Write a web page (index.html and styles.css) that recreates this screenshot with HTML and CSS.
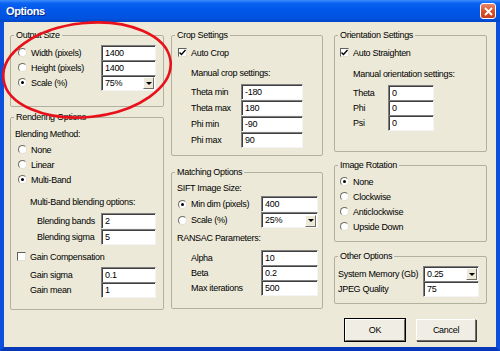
FILE: index.html
```html
<!DOCTYPE html>
<html lang="en">
<head>
  <meta charset="UTF-8" />
  <title>Options</title>
  <link rel="stylesheet" href="styles.css">
</head>
<body>

  <div class="window">

    <!-- Title bar -->
    <div class="titlebar">
      <span class="title">Options</span>
      <span class="close">
        <svg width="9" height="9" viewBox="0 0 9 9"><path d="M1 1L8 8M8 1L1 8" stroke="#fff" stroke-width="1.8"/></svg>
      </span>
    </div>

    <div class="frame">

      <!-- Left column -->
      <div class="col col-left">
        <fieldset class="group">
          <legend>Output Size</legend>
          <div class="inner output">
            <div class="row"><span class="radio"></span><span class="label">Width (pixels)</span><input class="field w55" type="text" value="1400"></div>
            <div class="row"><span class="radio"></span><span class="label">Height (pixels)</span><input class="field w55" type="text" value="1400"></div>
            <div class="row"><span class="radio on"></span><span class="label">Scale (%)</span><div class="combo w55">75%<span class="drop"></span></div></div>
          </div>
        </fieldset>

        <fieldset class="group gap5">
          <legend>Rendering Options</legend>
          <div class="inner rendering">
            <div class="text">Blending Method:</div>
            <div class="row ind3"><span class="radio"></span><span class="label">None</span></div>
            <div class="row ind3"><span class="radio"></span><span class="label">Linear</span></div>
            <div class="row ind3"><span class="radio on"></span><span class="label">Multi-Band</span></div>
            <div class="text ind15 mt8">Multi-Band blending options:</div>
            <div class="row tall ind22 mt3"><span class="label">Blending bands</span><input class="field w55" type="text" value="2"></div>
            <div class="row tall ind22"><span class="label">Blending sigma</span><input class="field w55" type="text" value="5"></div>
            <div class="row ind2 mt4"><span class="check"></span><span class="label">Gain Compensation</span></div>
            <div class="row ind15 mt3"><span class="label">Gain sigma</span><input class="field w55" type="text" value="0.1"></div>
            <div class="row ind15"><span class="label">Gain mean</span><input class="field w55" type="text" value="1"></div>
          </div>
        </fieldset>
      </div>

      <!-- Middle column -->
      <div class="col col-mid">
        <fieldset class="group">
          <legend>Crop Settings</legend>
          <div class="inner crop">
            <div class="row"><span class="check on"><svg width="7" height="7" viewBox="0 0 7 7"><path d="M0.5 3.5L2.5 5.5L6.5 1" fill="none" stroke="#000" stroke-width="1.4"/></svg></span><span class="label">Auto Crop</span></div>
            <div class="text ind13 mt6">Manual crop settings:</div>
            <div class="row tall ind13 mt3"><span class="label lw50">Theta min</span><input class="field w62" type="text" value="-180"></div>
            <div class="row tall ind13"><span class="label lw50">Theta max</span><input class="field w62" type="text" value="180"></div>
            <div class="row tall ind13"><span class="label lw50">Phi min</span><input class="field w62" type="text" value="-90"></div>
            <div class="row tall ind13"><span class="label lw50">Phi max</span><input class="field w62" type="text" value="90"></div>
          </div>
        </fieldset>

        <fieldset class="group gap11">
          <legend>Matching Options</legend>
          <div class="inner matching">
            <div class="text">SIFT Image Size:</div>
            <div class="row tall ind1"><span class="radio on"></span><span class="label">Min dim (pixels)</span><input class="field w57" type="text" value="400"></div>
            <div class="row tall ind1"><span class="radio"></span><span class="label">Scale (%)</span><div class="combo w57">25%<span class="drop"></span></div></div>
            <div class="text mt3">RANSAC Parameters:</div>
            <div class="row ind14 mt4"><span class="label">Alpha</span><input class="field w57" type="text" value="10"></div>
            <div class="row ind14"><span class="label">Beta</span><input class="field w57" type="text" value="0.2"></div>
            <div class="row ind14"><span class="label">Max iterations</span><input class="field w57" type="text" value="500"></div>
          </div>
        </fieldset>
      </div>

      <!-- Right column -->
      <div class="col col-right">
        <fieldset class="group">
          <legend>Orientation Settings</legend>
          <div class="inner orientation">
            <div class="row"><span class="check on"><svg width="7" height="7" viewBox="0 0 7 7"><path d="M0.5 3.5L2.5 5.5L6.5 1" fill="none" stroke="#000" stroke-width="1.4"/></svg></span><span class="label">Auto Straighten</span></div>
            <div class="text ind13 mt7">Manual orientation settings:</div>
            <div class="row ind13 mt3"><span class="label lw35">Theta</span><input class="field w46" type="text" value="0"></div>
            <div class="row ind13"><span class="label lw35">Phi</span><input class="field w46" type="text" value="0"></div>
            <div class="row ind13"><span class="label lw35">Psi</span><input class="field w46" type="text" value="0"></div>
          </div>
        </fieldset>

        <fieldset class="group gap8">
          <legend>Image Rotation</legend>
          <div class="inner rotation">
            <div class="row"><span class="radio on"></span><span class="label">None</span></div>
            <div class="row"><span class="radio"></span><span class="label">Clockwise</span></div>
            <div class="row"><span class="radio"></span><span class="label">Anticlockwise</span></div>
            <div class="row"><span class="radio"></span><span class="label">Upside Down</span></div>
          </div>
        </fieldset>

        <fieldset class="group gap9">
          <legend>Other Options</legend>
          <div class="inner other">
            <div class="row"><span class="label">System Memory (Gb)</span><div class="combo w56">0.25<span class="drop"></span></div></div>
            <div class="row"><span class="label">JPEG Quality</span><input class="field w56" type="text" value="75"></div>
          </div>
        </fieldset>

        <div class="buttons">
          <button class="btn default">OK</button>
          <button class="btn">Cancel</button>
        </div>
      </div>

    </div>

    <!-- red marker drawn over the dialog -->
    <svg class="marker" width="500" height="351" viewBox="0 0 500 351">
      <ellipse cx="87" cy="70" rx="84" ry="47" transform="rotate(-6 87 70)" fill="none" stroke="#e8101a" stroke-width="2.6"/>
    </svg>
  </div>

</body>
</html>
```

FILE: styles.css
```css
* { box-sizing: border-box; }
body {
  margin: 0;
  font-family: "Liberation Sans", Arial, sans-serif;
  font-size: 9px;
  letter-spacing: -0.3px;
  color: #000;
}

.window {
  position: relative;
  width: 500px;
  height: 351px;
  background: #ece9d8;
}

/* Title bar */
.titlebar {
  height: 22px;
  display: flex;
  align-items: center;
  justify-content: space-between;
  padding: 0 4px 0 6px;
  background: linear-gradient(to bottom, #3d8dfb 0%, #0a62f2 15%, #0057e8 45%, #0052de 85%, #0044c4 100%);
}
.title {
  color: #fff;
  font-weight: bold;
  font-size: 11px;
  letter-spacing: -0.4px;
  text-shadow: 1px 1px 0 #0a2a8c;
}
.close {
  width: 16px;
  height: 16px;
  border: 1px solid #fff;
  border-radius: 3px;
  background: linear-gradient(to bottom, #e9876a, #d9532c 50%, #c8401c);
  display: flex;
  align-items: center;
  justify-content: center;
}

/* Frame */
.frame {
  height: 329px;
  border: solid #0b4fdc;
  border-width: 0 4px 4px 4px;
  border-bottom-color: #0638b8;
  padding: 8px 0 0 6px;
  display: flex;
  align-items: flex-start;
}
.col-left { width: 154px; flex: none; }
.col-mid { width: 152px; flex: none; margin-left: 7px; }
.col-right { width: 153px; flex: none; margin-left: 11px; }

/* Group boxes */
.group {
  margin: 0;
  padding: 0;
  min-inline-size: 0;
  border: 1px solid #b2b09f;
  border-radius: 2px;
}
.group legend {
  margin-left: 3px;
  padding: 0 2px;
  line-height: 10px;
}
.gap5 { margin-top: 5px; }
.gap8 { margin-top: 8px; }
.gap9 { margin-top: 9px; }
.gap11 { margin-top: 11px; }

.output { padding: 5px 7px 16px 7px; }
.rendering { padding: 5px 7px 12px 4px; }
.crop { padding: 5px 0 7px 6px; }
.matching { padding: 4px 4px 13px 5px; }
.orientation { padding: 5px 0 21px 5px; }
.rotation { padding: 4px 0 7px 5px; }
.other { padding: 5px 7px 7px 3px; }

/* Rows */
.row {
  display: flex;
  align-items: center;
  height: 15px;
}
.row.tall { height: 16px; }
.text {
  height: 15px;
  line-height: 15px;
  white-space: nowrap;
}
.label { white-space: nowrap; }
.lw35 { width: 35px; }
.lw50 { width: 50px; }

.ind1 { padding-left: 1px; }
.ind2 { padding-left: 2px; }
.ind3 { padding-left: 3px; }
.ind13 { padding-left: 13px; }
.ind14 { padding-left: 14px; }
.ind15 { padding-left: 15px; }
.ind22 { padding-left: 22px; }
.mt3 { margin-top: 3px; }
.mt4 { margin-top: 4px; }
.mt6 { margin-top: 6px; }
.mt7 { margin-top: 7px; }
.mt8 { margin-top: 8px; }

/* Text fields and combos */
.field,
.combo {
  height: 16px;
  margin: 0 0 0 auto;
  padding: 0 0 0 3px;
  font: inherit;
  letter-spacing: inherit;
  color: #000;
  background: #fff;
  border: 1px solid;
  border-color: #7f7f7f #f4f4f4 #f4f4f4 #7f7f7f;
  box-shadow: inset 1px 1px 0 #3f3f3f;
  outline: none;
}
.lw35 + .field,
.lw50 + .field { margin-left: 0; }
.combo {
  display: flex;
  align-items: center;
  justify-content: space-between;
  padding-right: 1px;
}
.drop {
  width: 11px;
  height: 12px;
  margin-top: 1px;
  background: #ece9d8;
  border: 1px solid;
  border-color: #fff #6f6d63 #6f6d63 #fff;
  display: flex;
  align-items: center;
  justify-content: center;
}
.drop::after {
  content: "";
  border-top: 3px solid #000;
  border-left: 3px solid transparent;
  border-right: 3px solid transparent;
}
.w46 { width: 46px; }
.w55 { width: 55px; }
.w56 { width: 56px; }
.w57 { width: 57px; }
.w62 { width: 62px; }

/* Radios and checkboxes */
.radio {
  width: 9px;
  height: 9px;
  flex: none;
  margin-right: 4px;
  border-radius: 50%;
  background: #fff;
  border: 1px solid;
  border-color: #6e6c62 #e2e0d4 #e2e0d4 #6e6c62;
  display: flex;
  align-items: center;
  justify-content: center;
}
.radio.on::after {
  content: "";
  width: 3px;
  height: 3px;
  border-radius: 50%;
  background: #000;
}
.check {
  width: 9px;
  height: 9px;
  flex: none;
  margin-right: 4px;
  background: #fff;
  border: 1px solid;
  border-color: #5f5f5f #e4e2d6 #e4e2d6 #5f5f5f;
  display: flex;
  align-items: center;
  justify-content: center;
}

/* Buttons */
.buttons {
  display: flex;
  gap: 11px;
  margin-top: 15px;
  padding-left: 11px;
}
.btn {
  width: 60px;
  height: 22px;
  padding: 0;
  font: inherit;
  letter-spacing: inherit;
  color: #000;
  background: #f0eee4;
  border: 1px solid;
  border-color: #fff #6f6d63 #6f6d63 #fff;
  box-shadow: 1px 1px 0 #3a3a3a;
}
.btn.default {
  outline: 1px solid #000;
}

/* Red ellipse over the output group */
.marker {
  position: absolute;
  left: 0;
  top: 0;
  pointer-events: none;
}
```
